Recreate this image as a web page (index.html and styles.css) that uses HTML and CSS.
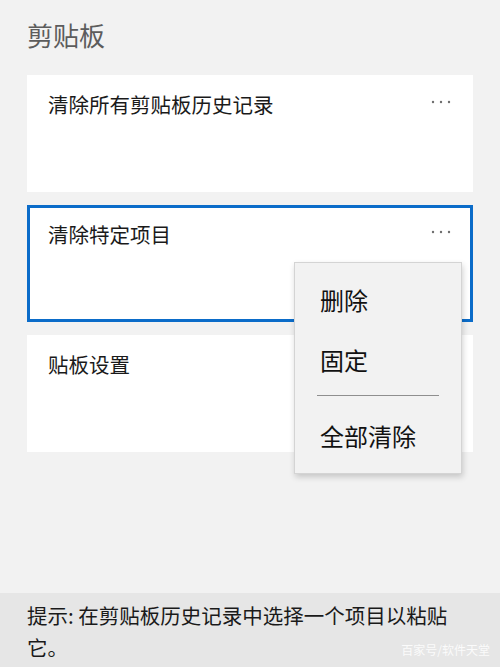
FILE: index.html
```html
<!DOCTYPE html>
<html lang="zh-CN">
<head>
    <meta charset="UTF-8">
    <meta name="viewport" content="width=device-width, initial-scale=1.0">
    <title>剪贴板</title>
    <link rel="stylesheet" href="styles.css">
</head>
<body>
    <div class="page">
        <div class="main">
            <div class="title">剪贴板</div>
            <div class="cards">
                <div class="card">
                    <div class="card_row">
                        <span class="card_text">清除所有剪贴板历史记录</span>
                        <svg class="more" width="22" height="4" viewBox="0 0 22 4"><circle cx="3" cy="2" r="1.2"/><circle cx="11" cy="2" r="1.2"/><circle cx="19" cy="2" r="1.2"/></svg>
                    </div>
                </div>
                <div class="card active">
                    <div class="card_row">
                        <span class="card_text">清除特定项目</span>
                        <svg class="more" width="22" height="4" viewBox="0 0 22 4"><circle cx="3" cy="2" r="1.2"/><circle cx="11" cy="2" r="1.2"/><circle cx="19" cy="2" r="1.2"/></svg>
                    </div>
                </div>
                <div class="card">
                    <div class="card_row">
                        <span class="card_text">贴板设置</span>
                    </div>
                </div>
            </div>
        </div>
        <div class="menu">
            <div class="menu_item">删除</div>
            <div class="menu_item">固定</div>
            <div class="menu_sep"></div>
            <div class="menu_item">全部清除</div>
        </div>
        <div class="footer">
            <div class="tip">提示: 在剪贴板历史记录中选择一个项目以粘贴</div>
            <div class="tip_row">
                <span class="tip">它。</span>
                <span class="mark">百家号/软件天堂</span>
            </div>
        </div>
    </div>
</body>
</html>
```

FILE: styles.css
```css
*{
    margin: 0;
    padding: 0;
    box-sizing: border-box;
}
body{
    width: 500px;
    height: 667px;
    background: #f2f2f2;
    font-family: "Noto Sans CJK SC", "Noto Sans", sans-serif;
    color: #1a1a1a;
    overflow: hidden;
}
.page{
    position: relative;
    height: 667px;
    display: flex;
    flex-direction: column;
}
.main{
    flex: 1;
    padding: 18px 27px 0 27px;
}
.title{
    font-size: 26px;
    line-height: 34px;
    color: #5c5c5c;
    margin-bottom: 23px;
}
.cards{
    display: flex;
    flex-direction: column;
    gap: 13px;
}
.card{
    height: 117px;
    background: #fff;
    padding: 16px 21px;
}
.card.active{
    border: 3px solid #0b6cc9;
    padding: 13px 18px;
}
.card_row{
    display: flex;
    justify-content: space-between;
    align-items: center;
}
.card_text{
    font-size: 20.5px;
    line-height: 26px;
}
.more{
    fill: #6e6e6e;
    margin-bottom: 5px;
}
.menu{
    position: absolute;
    left: 294px;
    top: 262px;
    width: 168px;
    background: #f2f2f2;
    border: 1px solid #d4d4d4;
    box-shadow: 1px 3px 6px rgba(0, 0, 0, 0.18);
    padding: 7px 0 7px 0;
}
.menu_item{
    height: 60px;
    line-height: 60px;
    font-size: 24px;
    padding-left: 25px;
    color: #111;
}
.menu_sep{
    height: 1px;
    background: #8f8f8f;
    margin: 5px 22px 10px 22px;
}
.footer{
    height: 74px;
    background: #e6e6e6;
    padding: 6px 10px 0 27px;
}
.tip{
    font-size: 20.5px;
    line-height: 32px;
}
.tip_row{
    display: flex;
    justify-content: space-between;
    align-items: flex-end;
}
.mark{
    font-size: 12px;
    line-height: 16px;
    margin-bottom: 5px;
    color: rgba(255, 255, 255, 0.85);
}
```
